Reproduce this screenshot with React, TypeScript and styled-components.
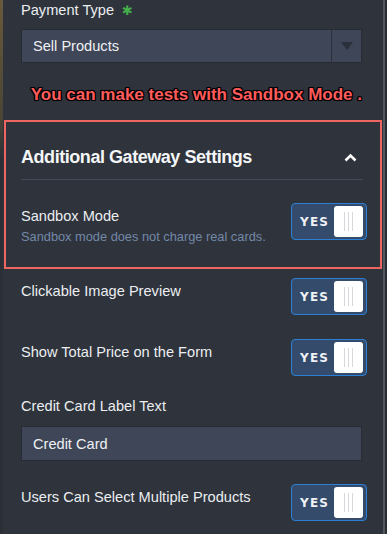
import React from 'react';
import styled, { createGlobalStyle } from 'styled-components';

const GlobalStyle = createGlobalStyle`
  html, body {
    margin: 0;
    padding: 0;
    background: #2e333c;
  }
  body {
    font-family: "Liberation Sans", Arial, sans-serif;
    -webkit-font-smoothing: antialiased;
  }
`;

const Frame = styled.div`
  display: flex;
  width: 387px;
  height: 534px;
  overflow: hidden;
  background: #2e333c;
`;

const LeftEdge = styled.div`
  width: 3px;
  flex-shrink: 0;
  background: linear-gradient(#6a5a3c 0%, #4a4536 22%, #2c2f35 30%, #2c2f35 100%);
`;

const RightEdge = styled.div`
  width: 4px;
  flex-shrink: 0;
  display: flex;
  &::before {
    content: '';
    width: 2px;
    background: #53575e;
  }
  &::after {
    content: '';
    width: 2px;
    background: #2a2d33;
  }
`;

const Panel = styled.div`
  flex: 1;
  display: flex;
  flex-direction: column;
  padding: 2px 16px 0 18px;
  color: #eceef1;
`;

const FieldLabel = styled.div<{ $mt?: number }>`
  font-size: 14.6px;
  line-height: 17px;
  color: #eceef1;
  margin-top: ${p => p.$mt ?? 0}px;
  display: flex;
  align-items: center;
  gap: 8px;
`;

const Required = styled.span`
  color: #45b04a;
  font-size: 13px;
  line-height: 17px;
  font-family: "DejaVu Sans", sans-serif;
`;

const SelectBox = styled.div`
  margin-top: 10px;
  width: calc(100% - 5px);
  height: 34px;
  box-sizing: border-box;
  display: flex;
  background: #3e4658;
  border: 1px solid #272b33;
  font-size: 14.6px;
  color: #eef0f3;
`;

const SelectValue = styled.div`
  flex: 1;
  display: flex;
  align-items: center;
  padding-left: 11px;
`;

const SelectArrow = styled.div`
  width: 29px;
  border-left: 1px solid #2b303a;
  display: flex;
  align-items: center;
  justify-content: center;
  &::after {
    content: '';
    width: 0;
    height: 0;
    border-left: 6px solid transparent;
    border-right: 6px solid transparent;
    border-top: 8px solid #2a2f39;
  }
`;

const Notice = styled.div`
  margin-top: 22px;
  margin-right: 5px;
  text-align: right;
  white-space: nowrap;
  font-size: 17px;
  font-weight: bold;
  line-height: 20px;
  color: #ff5b5b;
  text-shadow: -1px -1px 0 #000, 1px -1px 0 #000, -1px 1px 0 #000, 1px 1px 0 #000,
    0 -1px 0 #000, 0 1px 0 #000, -1px 0 0 #000, 1px 0 0 #000, 0 0 2px #000;
`;

const GatewayBox = styled.div`
  margin: 15px -15px 0 -17px;
  border: 2px solid #ef6561;
  padding: 0 13px 0 15px;
  height: 149px;
  box-sizing: border-box;
`;

const GatewayHeader = styled.div`
  display: flex;
  align-items: center;
  justify-content: space-between;
  height: 58px;
  padding-top: 13px;
  box-sizing: border-box;
  border-bottom: 1px solid #434958;
  margin-right: 4px;
`;

const GatewayTitle = styled.div`
  font-size: 18px;
  font-weight: bold;
  color: #f4f5f7;
  letter-spacing: -0.45px;
`;

const Chevron = styled.svg`
  margin-right: 6px;
`;

const ToggleRow = styled.div<{ $mt: number }>`
  display: flex;
  justify-content: space-between;
  align-items: flex-start;
  margin-top: ${p => p.$mt}px;
`;

const RowText = styled.div`
  display: flex;
  flex-direction: column;
  padding-top: 5px;
`;

const Hint = styled.div`
  margin-top: 4px;
  font-size: 12.8px;
  line-height: 15px;
  color: #7489a8;
`;

const Toggle = styled.div`
  width: 76px;
  height: 37px;
  box-sizing: border-box;
  flex-shrink: 0;
  border: 1px solid #2b80d6;
  border-radius: 4px;
  background: #344b6b;
  display: flex;
  align-items: center;
  justify-content: space-between;
  padding: 2px 3px 2px 8px;
`;

const ToggleText = styled.span`
  font-size: 12px;
  font-weight: 900;
  letter-spacing: 1.2px;
  color: #eef1f5;
  font-family: "DejaVu Sans", "Liberation Sans", sans-serif;
`;

const Knob = styled.div`
  width: 29px;
  height: 31px;
  background: #ffffff;
  border-radius: 3px;
  display: flex;
  align-items: center;
  justify-content: center;
  gap: 3px;
`;

const KnobLine = styled.span`
  width: 1px;
  height: 19px;
  background: #d6d8db;
`;

const TextInput = styled.div`
  margin-top: 11px;
  width: calc(100% - 5px);
  height: 35px;
  box-sizing: border-box;
  background: #3e4658;
  border: 1px solid #272b33;
  display: flex;
  align-items: center;
  padding-left: 11px;
  font-size: 14.6px;
  color: #eef0f3;
`;

const YesToggle = () => (
  <Toggle>
    <ToggleText>YES</ToggleText>
    <Knob>
      <KnobLine />
      <KnobLine />
      <KnobLine />
    </Knob>
  </Toggle>
);

export default function App() {
  return (
    <>
      <GlobalStyle />
      <Frame>
        <LeftEdge />
        <Panel>
          <FieldLabel>
            Payment Type <Required>✱</Required>
          </FieldLabel>
          <SelectBox>
            <SelectValue>Sell Products</SelectValue>
            <SelectArrow />
          </SelectBox>

          <Notice>You can make tests with Sandbox Mode .</Notice>

          <GatewayBox>
            <GatewayHeader>
              <GatewayTitle>Additional Gateway Settings</GatewayTitle>
              <Chevron width="13" height="9" viewBox="0 0 13 9">
                <path d="M1.5 7.5 L6.5 2.5 L11.5 7.5" fill="none" stroke="#ffffff" strokeWidth="2.6" />
              </Chevron>
            </GatewayHeader>
            <ToggleRow $mt={23}>
              <RowText>
                <FieldLabel>Sandbox Mode</FieldLabel>
                <Hint>Sandbox mode does not charge real cards.</Hint>
              </RowText>
              <YesToggle />
            </ToggleRow>
          </GatewayBox>

          <ToggleRow $mt={9}>
            <RowText>
              <FieldLabel>Clickable Image Preview</FieldLabel>
            </RowText>
            <YesToggle />
          </ToggleRow>

          <ToggleRow $mt={24}>
            <RowText>
              <FieldLabel>Show Total Price on the Form</FieldLabel>
            </RowText>
            <YesToggle />
          </ToggleRow>

          <FieldLabel $mt={22}>Credit Card Label Text</FieldLabel>
          <TextInput>Credit Card</TextInput>

          <ToggleRow $mt={23}>
            <RowText>
              <FieldLabel>Users Can Select Multiple Products</FieldLabel>
            </RowText>
            <YesToggle />
          </ToggleRow>
        </Panel>
        <RightEdge />
      </Frame>
    </>
  );
}
